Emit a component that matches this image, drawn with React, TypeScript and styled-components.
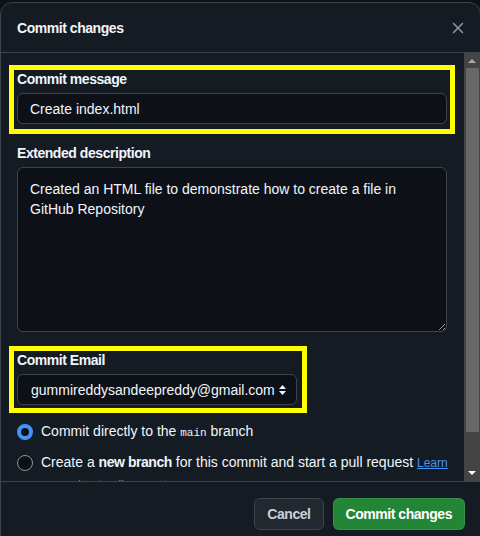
import React from "react";
import styled, { createGlobalStyle } from "styled-components";

const GlobalStyle = createGlobalStyle`
  html, body { margin: 0; padding: 0; background: #0e1116; overflow: hidden; }
  body {
    font-family: "Liberation Sans", Arial, sans-serif;
    font-size: 14px;
    color: #f0f6fc;
  }
  * { box-sizing: border-box; }
`;

const Page = styled.div`
  width: 480px;
  height: 536px;
  overflow: hidden;
  padding-top: 2px;
  background: #0e1116;
`;

const Dialog = styled.section`
  width: 481px;
  height: 545px;
  display: flex;
  flex-direction: column;
  background: #151b23;
  border: 1px solid #3d444d;
  border-radius: 12px 12px 0 0;
  overflow: hidden;
`;

const Header = styled.header`
  height: 50px;
  flex: none;
  display: flex;
  align-items: center;
  justify-content: space-between;
  padding: 0 14px 0 16px;
  border-bottom: 1px solid #3d444d;
`;

const Title = styled.h1`
  margin: 0;
  font-size: 14px;
  font-weight: 700;
  line-height: 20px;
  letter-spacing: -0.45px;
  color: #f0f6fc;
`;

const CloseButton = styled.button`
  all: unset;
  width: 16px;
  height: 16px;
  display: flex;
  color: #9198a1;
`;

const Body = styled.div`
  height: 428px;
  flex: none;
  display: flex;
  overflow: hidden;
`;

const Content = styled.div`
  flex: 1;
  min-width: 0;
  padding: 12px 17px 0 16px;
  overflow: hidden;
  display: flex;
  flex-direction: column;
`;

const Highlight = styled.div<{ $fit?: boolean; $pb: number }>`
  margin: 0 -8px;
  border: 5px solid #ffff00;
  padding: 0 ${(p) => (p.$fit ? 5 : 3)}px ${(p) => p.$pb}px 3px;
  width: ${(p) => (p.$fit ? "fit-content" : "auto")};
`;

const Field = styled.div<{ $mt: number }>`
  margin-top: ${(p) => p.$mt}px;
`;

const Label = styled.label`
  display: block;
  font-weight: 700;
  font-size: 14px;
  line-height: 18px;
  letter-spacing: -0.45px;
  margin-bottom: 5px;
  color: #f0f6fc;
`;

const TextInput = styled.input`
  display: block;
  width: 100%;
  height: 31px;
  padding: 0 12px;
  background: #0d1117;
  border: 1px solid #3d444d;
  border-radius: 6px;
  color: #f0f6fc;
  font: 14px "Liberation Sans", Arial, sans-serif;
  outline: none;
`;

const TextArea = styled.textarea`
  display: block;
  width: 100%;
  height: 165px;
  padding: 11px 12px;
  background: #0d1117;
  border: 1px solid #3d444d;
  border-radius: 6px;
  color: #f0f6fc;
  font: 14px/20px "Liberation Sans", Arial, sans-serif;
  resize: vertical;
  outline: none;
  color-scheme: dark;
`;

const SelectBox = styled.div`
  display: inline-flex;
  align-items: center;
  gap: 4px;
  height: 31px;
  padding: 0 10px 0 13px;
  background: #0d1117;
  border: 1px solid #3d444d;
  border-radius: 6px;
  color: #f0f6fc;
  font-size: 14px;
`;

const RadioList = styled.div`
  margin-top: 8px;
  margin-right: -4px;
  display: flex;
  flex-direction: column;
  gap: 8px;
`;

const RadioRow = styled.label`
  display: flex;
  align-items: flex-start;
  gap: 8px;
  font-size: 14px;
  line-height: 21px;
  color: #f0f6fc;
`;

const RadioDot = styled.span<{ $checked?: boolean }>`
  flex: none;
  width: 16px;
  height: 16px;
  margin-top: 2.5px;
  border-radius: 50%;
  background: #0d1117;
  border: ${(p) => (p.$checked ? "4px solid #4493f8" : "1px solid #8b949e")};
`;

const Strong = styled.b`
  font-weight: 700;
  letter-spacing: -0.45px;
`;

const Code = styled.code`
  font-family: "Liberation Mono", monospace;
  font-size: 11px;
`;

const Link = styled.a`
  color: #4493f8;
  text-decoration: underline;
  font-size: 12px;
`;

const Scrollbar = styled.div`
  width: 16px;
  flex: none;
  display: flex;
  flex-direction: column;
  background: #444444;
`;

const ScrollArrow = styled.div<{ $dir: "up" | "down" }>`
  height: ${(p) => (p.$dir === "up" ? 15 : 16)}px;
  flex: none;
  display: flex;
  align-items: center;
  justify-content: center;
  &::before {
    content: "";
    border-left: 4px solid transparent;
    border-right: 4px solid transparent;
    ${(p) =>
      p.$dir === "up"
        ? "border-bottom: 4px solid #a9a9a9;"
        : "border-top: 4px solid #ffffff;"}
  }
`;

const Thumb = styled.div`
  height: 364px;
  flex: none;
  margin: 0 1px 0 2px;
  background: #686868;
`;

const Track = styled.div`
  flex: 1;
`;

const Footer = styled.footer`
  flex: none;
  display: flex;
  justify-content: flex-end;
  gap: 9px;
  padding: 16px 15px;
  border-top: 1px solid #3d444d;
`;

const Button = styled.button<{ $primary?: boolean }>`
  height: 32px;
  padding: 0 12px;
  border-radius: 6px;
  font: 700 14px "Liberation Sans", Arial, sans-serif;
  letter-spacing: -0.45px;
  border: 1px solid ${(p) => (p.$primary ? "rgba(240,246,252,0.1)" : "#3d444d")};
  background: ${(p) => (p.$primary ? "#238636" : "#212830")};
  color: ${(p) => (p.$primary ? "#ffffff" : "#c9d1d9")};
`;

const CloseIcon = () => (
  <svg width="16" height="16" viewBox="0 0 16 16" fill="none">
    <path d="M3.5 3.5 L12.5 12.5 M12.5 3.5 L3.5 12.5" stroke="currentColor" strokeWidth="1.5" strokeLinecap="round" />
  </svg>
);

const SortIcon = () => (
  <svg width="7" height="10" viewBox="0 0 7 10">
    <path d="M3.5 0 L7 4 L0 4 Z M0 6 L7 6 L3.5 10 Z" fill="#f0f6fc" />
  </svg>
);

export default function App() {
  return (
    <>
      <GlobalStyle />
      <Page>
        <Dialog>
          <Header>
            <Title>Commit changes</Title>
            <CloseButton aria-label="Close">
              <CloseIcon />
            </CloseButton>
          </Header>
          <Body>
            <Content>
              <Highlight $pb={5}>
                <Label>Commit message</Label>
                <TextInput readOnly value="Create index.html" />
              </Highlight>
              <Field $mt={10}>
                <Label>Extended description</Label>
                <TextArea
                  readOnly
                  value="Created an HTML file to demonstrate how to create a file in GitHub Repository"
                />
              </Field>
              <Field $mt={14}>
                <Highlight $fit $pb={3}>
                  <Label>Commit Email</Label>
                  <SelectBox>
                    <span>gummireddysandeepreddy@gmail.com</span>
                    <SortIcon />
                  </SelectBox>
                </Highlight>
              </Field>
              <RadioList>
                <RadioRow>
                  <RadioDot $checked />
                  <span>
                    Commit directly to the <Code>main</Code> branch
                  </span>
                </RadioRow>
                <RadioRow>
                  <RadioDot />
                  <span>
                    Create a <Strong>new branch</Strong> for this commit and start a pull request{" "}
                    <Link href="#">Learn more about pull requests</Link>
                  </span>
                </RadioRow>
              </RadioList>
            </Content>
            <Scrollbar>
              <ScrollArrow $dir="up" />
              <Thumb />
              <Track />
              <ScrollArrow $dir="down" />
            </Scrollbar>
          </Body>
          <Footer>
            <Button>Cancel</Button>
            <Button $primary>Commit changes</Button>
          </Footer>
        </Dialog>
      </Page>
    </>
  );
}
